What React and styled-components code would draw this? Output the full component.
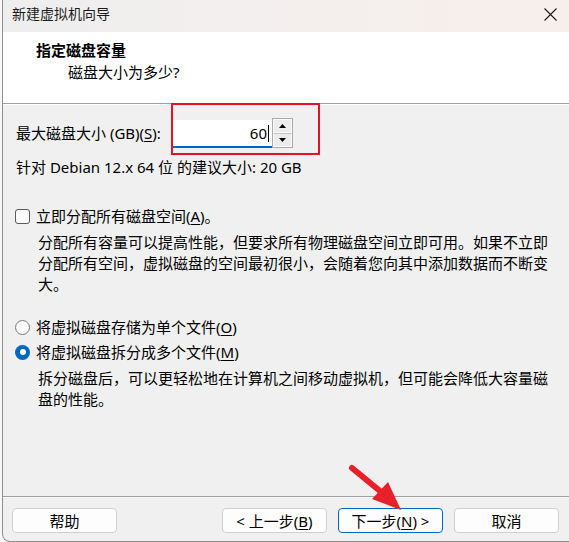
import React from "react";
import styled, { createGlobalStyle } from "styled-components";

const FONT = `"Noto Sans", "Noto Sans CJK SC", sans-serif`;

const GlobalStyle = createGlobalStyle`
  html, body { margin: 0; padding: 0; background: #f8f8f8; }
  body { font-family: ${FONT}; font-size: 15px; color: #000; }
  * { box-sizing: border-box; }
`;

const Window = styled.div`
  position: relative;
  margin-left: 2px;
  width: 567px;
  height: 542px;
  background: #f0f0f0;
  border-left: 1px solid #8e8e8e;
  border-bottom: 1px solid #8e8e8e;
  border-bottom-left-radius: 8px;
  overflow: hidden;
  display: flex;
  flex-direction: column;
`;

const TitleBar = styled.div`
  flex: none;
  height: 32px;
  display: flex;
  align-items: center;
  justify-content: space-between;
  padding: 0 12px 4px 9px;
  background: linear-gradient(90deg, #eeeeee 0%, #f3efee 45%, #f7efeb 100%);
  font-size: 14px;
  line-height: 20px;
  color: #1b1b1b;
`;

const Header = styled.div`
  flex: none;
  height: 72px;
  background: #fff;
  border-bottom: 1px solid #a0a0a0;
  box-shadow: 0 1px 0 #ffffff;
  padding: 8px 0 0 33px;
`;

const HeaderTitle = styled.div`
  font-weight: bold;
  font-size: 15px;
  line-height: 20px;
`;

const HeaderSub = styled.div`
  margin: 2px 0 0 32px;
  font-size: 15px;
  line-height: 20px;
`;

const Body = styled.div`
  flex: 1;
  padding: 14px 16px 0 13px;
  display: flex;
  flex-direction: column;
`;

const SizeRow = styled.div`
  display: flex;
  align-items: flex-end;
  height: 30px;
`;

const Label = styled.div`
  width: 156px;
  align-self: center;
  line-height: 20px;
  white-space: nowrap;
`;

const InputGroup = styled.div`
  position: relative;
  display: flex;
  align-items: flex-end;
`;

const Field = styled.div`
  width: 100px;
  height: 28px;
  background: #fff;
  border-bottom: 2px solid #0067c0;
  display: flex;
  align-items: center;
  justify-content: flex-end;
  padding: 0 3px 0 0;
  line-height: 20px;
`;

const Caret = styled.span`
  display: inline-block;
  width: 1px;
  height: 17px;
  background: #000;
  margin-left: 1px;
`;

const Spinner = styled.div`
  width: 21px;
  height: 30px;
  border: 1px solid #ababab;
  background: #f0f0f0;
  display: flex;
  flex-direction: column;
`;

const SpinBtn = styled.div`
  flex: 1;
  display: flex;
  align-items: center;
  justify-content: center;
  background: #ececec;
  border: 1px solid #fafafa;
  & + & {
    border-top: 1px solid #c4c4c4;
  }
`;

const Highlight = styled.div`
  position: absolute;
  left: -1px;
  top: -15px;
  width: 149px;
  height: 52px;
  border: 2px solid #e81123;
  pointer-events: none;
`;

const Line = styled.div`
  line-height: 20px;
  margin-top: ${(p) => p.$mt || 0}px;
  white-space: nowrap;
`;

const Option = styled.label`
  display: flex;
  align-items: center;
  gap: 6px;
  line-height: 20px;
  margin-top: ${(p) => p.$mt || 0}px;
  margin-left: -1px;
`;

const CheckBox = styled.span`
  flex: none;
  width: 15px;
  height: 15px;
  border: 1px solid #5a5a5a;
  border-radius: 3px;
  background: #fbfbfb;
`;

const Radio = styled.span`
  flex: none;
  width: 15px;
  height: 15px;
  border-radius: 50%;
  display: flex;
  align-items: center;
  justify-content: center;
  border: ${(p) => (p.$checked ? "none" : "1px solid #7a7a7a")};
  background: ${(p) => (p.$checked ? "#0067c0" : "#fbfbfb")};
  &::after {
    content: "";
    display: ${(p) => (p.$checked ? "block" : "none")};
    width: 6px;
    height: 6px;
    border-radius: 50%;
    background: #fff;
  }
`;

const Desc = styled.div`
  margin: ${(p) => p.$mt || 0}px 0 0 22px;
  width: 515px;
  line-height: 21px;
`;

const Footer = styled.div`
  flex: none;
  height: 45px;
  border-top: 1px solid #a0a0a0;
  box-shadow: inset 0 1px 0 #f8f8f8;
  padding: 11px 10px 0 9px;
  display: flex;
  gap: 11px;
`;

const Button = styled.button`
  width: 105px;
  height: 25px;
  padding: 0;
  background: #fdfdfd;
  border: 1px solid ${(p) => (p.$primary ? "#0067c0" : "#d0d0d0")};
  border-radius: 4px;
  font-family: ${FONT};
  font-size: 15px;
  line-height: 20px;
  color: #000;
  margin-right: ${(p) => (p.$push ? "auto" : "0")};
`;

const Arrow = styled.svg`
  position: absolute;
  left: 342px;
  top: 460px;
  pointer-events: none;
`;

const U = styled.span`
  text-decoration: underline;
  text-underline-offset: 2px;
`;

export default function App() {
  return (
    <>
      <GlobalStyle />
      <Window>
        <TitleBar>
          <span>新建虚拟机向导</span>
          <svg width="13" height="13" viewBox="0 0 13 13">
            <path d="M0.5 0.5 L12.5 12.5 M12.5 0.5 L0.5 12.5" stroke="#1b1b1b" strokeWidth="1.1" fill="none" />
          </svg>
        </TitleBar>
        <Header>
          <HeaderTitle>指定磁盘容量</HeaderTitle>
          <HeaderSub>磁盘大小为多少?</HeaderSub>
        </Header>
        <Body>
          <SizeRow>
            <Label>
              最大磁盘大小 (GB)(<U>S</U>):
            </Label>
            <InputGroup>
              <Field>
                60
                <Caret />
              </Field>
              <Spinner>
                <SpinBtn>
                  <svg width="7" height="4" viewBox="0 0 7 4">
                    <path d="M0 4 L3.5 0 L7 4 Z" fill="#000" />
                  </svg>
                </SpinBtn>
                <SpinBtn>
                  <svg width="7" height="4" viewBox="0 0 7 4">
                    <path d="M0 0 L3.5 4 L7 0 Z" fill="#000" />
                  </svg>
                </SpinBtn>
              </Spinner>
              <Highlight />
            </InputGroup>
          </SizeRow>
          <Line $mt={9}>针对 Debian 12.x 64 位 的建议大小: 20 GB</Line>

          <Option $mt={29}>
            <CheckBox />
            <span>
              立即分配所有磁盘空间(<U>A</U>)。
            </span>
          </Option>
          <Desc $mt={6}>
            分配所有容量可以提高性能，但要求所有物理磁盘空间立即可用。如果不立即分配所有空间，虚拟磁盘的空间最初很小，会随着您向其中添加数据而不断变大。
          </Desc>

          <Option $mt={22}>
            <Radio />
            <span>
              将虚拟磁盘存储为单个文件(<U>O</U>)
            </span>
          </Option>
          <Option $mt={5}>
            <Radio $checked />
            <span>
              将虚拟磁盘拆分成多个文件(<U>M</U>)
            </span>
          </Option>
          <Desc $mt={6}>
            拆分磁盘后，可以更轻松地在计算机之间移动虚拟机，但可能会降低大容量磁盘的性能。
          </Desc>
        </Body>
        <Footer>
          <Button $push>帮助</Button>
          <Button>
            &lt; 上一步(<U>B</U>)
          </Button>
          <Button $primary>
            下一步(<U>N</U>) &gt;
          </Button>
          <Button>取消</Button>
        </Footer>
        <Arrow width="60" height="55" viewBox="0 0 60 55">
          <line x1="7" y1="8" x2="35" y2="31" stroke="#e8202a" strokeWidth="6" strokeLinecap="round" />
          <polygon points="56,50 27,39 43,22" fill="#e8202a" />
        </Arrow>
      </Window>
    </>
  );
}
